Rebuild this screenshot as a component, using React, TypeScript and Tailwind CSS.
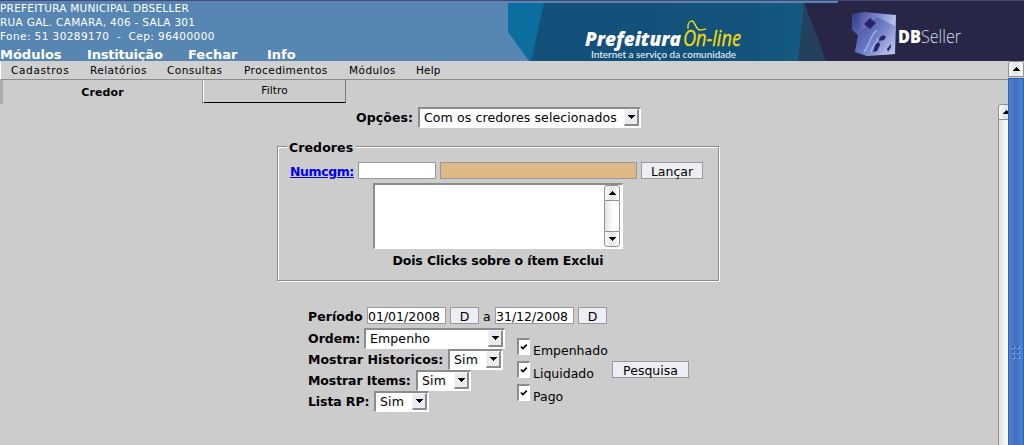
import React from "react";

type BoxProps = { className?: string; children?: React.ReactNode };

function Arrow({ up = false }: { up?: boolean }) {
  return (
    <svg width="7" height="4" viewBox="0 0 7 4" shapeRendering="crispEdges" className="block">
      <path d={up ? "M3 0h1v1h1v1h1v1h1v1H0V3h1V2h1V1h1z" : "M0 0h7v1H6v1H5v1H4v1H3V3H2V2H1V1H0z"} />
    </svg>
  );
}

function Select({ className = "", children }: BoxProps) {
  return (
    <button
      type="button"
      className={`flex h-[21px] shrink-0 items-stretch justify-between border-2 border-r-[1px] border-b-[1px] border-t-[#8c8c8c] border-l-[#8c8c8c] border-r-white border-b-white bg-white pr-px pb-px text-left text-[12.5px] leading-[17px] tracking-[0.11px] ${className}`}
    >
      <span className="pl-1 whitespace-nowrap">{children}</span>
      <span className="flex w-[15px] items-center justify-center border-t border-r-2 border-b-2 border-l border-t-[#f4f5f9] border-l-[#f4f5f9] border-r-[#8c8c8c] border-b-[#8c8c8c] bg-[#e9ebf1]">
        <Arrow />
      </span>
    </button>
  );
}

function Button({ className = "", children }: BoxProps) {
  return (
    <button
      type="button"
      className={`flex h-[17px] shrink-0 items-center justify-center border border-[#999] bg-[#edeef3] pt-px text-[12.5px] leading-[15px] ${className}`}
    >
      {children}
    </button>
  );
}

function Field({ className = "", children }: BoxProps) {
  return (
    <div className={`h-[17px] shrink-0 border border-[#999] pt-px text-[12.5px] leading-[16px] whitespace-nowrap ${className}`}>
      {children}
    </div>
  );
}

function Check({ children }: BoxProps) {
  return (
    <label className="flex h-[23px]">
      <span className="flex h-[17px] w-[13px] items-center justify-center border-t-2 border-r border-b border-l-2 border-t-[#8c8c8c] border-r-white border-b-white border-l-[#8c8c8c] bg-white pb-px">
        <svg width="8" height="8" viewBox="0 0 8 8" fill="none" stroke="#000" strokeWidth="1.6">
          <path d="M.9 3.500 2.900 5.500 6.800 1.600" />
        </svg>
      </span>
      <span className="pt-[5px] pl-[3px] text-[12.5px] leading-[16px]">{children}</span>
    </label>
  );
}

function ScrollButton({ up = false }: { up?: boolean }) {
  return (
    <div
      className={`flex h-4 w-4 shrink-0 items-center justify-center border border-[#929292] bg-linear-to-r from-[#fafafa] via-[#e3e3e5] to-white ${up ? "rounded-t-[3px]" : "rounded-b-[3px]"}`}
    >
      <Arrow up={up} />
    </div>
  );
}

function Banner() {
  return (
    <svg width="516" height="61" viewBox="508 0 516 61" className="block shrink-0">
      <defs>
        <linearGradient id="sea" x1="0" x2="1">
          <stop offset="0" stopColor="#13507a" />
          <stop offset=".75" stopColor="#13527b" />
          <stop offset="1" stopColor="#145b80" />
        </linearGradient>
        <linearGradient id="cube" x1="0" y1="0" x2="1" y2=".4">
          <stop offset="0" stopColor="#3b4185" />
          <stop offset=".5" stopColor="#7581cb" />
          <stop offset="1" stopColor="#c5d0f3" />
        </linearGradient>
        <linearGradient id="front" x1="0" y1="0" x2="1" y2="1">
          <stop offset="0" stopColor="#333b8b" />
          <stop offset=".55" stopColor="#6171bf" />
          <stop offset="1" stopColor="#bdc8ef" />
        </linearGradient>
      </defs>
      <path d="M508 3h36v58h-15l-21-29z" fill="#0b6e9f" />
      <path d="M544 3h262v58H531z" fill="url(#sea)" />
      <path d="M804 3h2l22 58h-30z" fill="#23405f" />
      <path d="M804.500 3H838V1h186v60H826z" fill="#272646" />
      <g fontFamily="'Open Sans', sans-serif">
        <text x="585" y="46" fontSize="20" fontWeight="800" fontStyle="italic" fill="#fff" textLength="96" lengthAdjust="spacingAndGlyphs">Prefeitura</text>
        <text x="683" y="46" fontSize="21" fontStyle="italic" fill="#f1dc0b" stroke="#f1dc0b" strokeWidth=".3" textLength="58" lengthAdjust="spacingAndGlyphs">On-line</text>
      </g>
      <path d="M688 29v-3c0-3 2-5 4-5s3 4 5 7 4 2 9 1" fill="none" stroke="#f1dc0b" strokeWidth="1.4" />
      <text x="591" y="57.500" fontFamily="Lato, sans-serif" fontSize="9.500" fontWeight="500" fill="#e8f2f6" textLength="145" lengthAdjust="spacingAndGlyphs">Internet a serviço da comunidade</text>
      <path d="m852 14 12-2 32 3-1 39-28 2-12-4 3-17-6-5z" fill="url(#cube)" />
      <path d="m852 14 7-1 1 14-1 4-7-2zM855 52l4-19 18-16 18 9v28l-28 1z" fill="url(#front)" opacity=".7" />
      <path d="m864 24 6-6 6 5-6 6zM879 41c0-5 5-7 7-4l-2 3zM873 52c2-5 1-8 6-10l1 3-3 6zM887 49l4-5v3l-3 5z" fill="#2c236e" />
      <path d="M864 52c6-7 5-15 13-22M871 52c1-7 6-8 7-14" fill="none" stroke="#a9b9ec" strokeWidth="1.200" />
      <text x="898" y="43" fontFamily="'Open Sans', sans-serif" fontSize="18" fontWeight="800" fill="#fff" textLength="23" lengthAdjust="spacingAndGlyphs">DB</text>
      <text x="921" y="43" fontFamily="'Open Sans', sans-serif" fontSize="19" fontWeight="300" fill="#dadbe7" textLength="40" lengthAdjust="spacingAndGlyphs">Seller</text>
      <path d="M508 .5h516" stroke="#484778" />
    </svg>
  );
}

export default function App() {
  return (
    <div className="flex h-[445px] w-[1024px] flex-col overflow-hidden bg-[#ccc] font-['DejaVu_Sans',sans-serif] text-black">
      <header className="flex h-[61px] shrink-0 bg-[#5886b2] text-white">
        <div className="w-[508px] border-t border-[#484778]">
          <div className="text-[10.5px] leading-[14px] whitespace-pre">
            <p className="tracking-[0.25px]">PREFEITURA MUNICIPAL DBSELLER</p>
            <p className="tracking-[0.3px]">RUA GAL. CAMARA, 406 - SALA 301</p>
            <p className="tracking-[0.42px]">{"Fone: 51 30289170  -  Cep: 96400000"}</p>
          </div>
          <nav className="mt-1 flex text-[13px] leading-4 font-bold">
            <a className="w-[87px]">Módulos</a>
            <a className="w-[101px] tracking-[-0.2px]">Instituição</a>
            <a className="w-[79px]">Fechar</a>
            <a>Info</a>
          </nav>
        </div>
        <Banner />
      </header>

      <div className="flex min-h-0 flex-1">
        <div className="flex w-[1008px] flex-col">
          <nav className="flex h-[19px] shrink-0 border-b border-l border-b-[#8c8c8c] border-l-white bg-[#d0d0d0] pl-[10px] text-[10.5px] leading-[19px] tracking-[0.45px]">
            <a className="w-[79px] tracking-[0.65px]">Cadastros</a>
            <a className="w-[77px]">Relatórios</a>
            <a className="w-[77px]">Consultas</a>
            <a className="w-[105px]">Procedimentos</a>
            <a className="w-[67px]">Módulos</a>
            <a className="tracking-[0.2px]">Help</a>
          </nav>

          <div className="flex h-6 shrink-0 text-center text-[11px]">
            <div className="w-[203px] border-r border-l-[3px] border-r-[#999] border-l-[#aaa] pt-px leading-6 font-bold tracking-[0.1px]">Credor</div>
            <div className="h-[23px] w-[143px] border-r border-b border-l border-r-[#777] border-b-black border-l-white text-[10.5px] leading-5 tracking-[0.1px]">Filtro</div>
          </div>

          <div className="flex min-h-0 flex-1">
            <main className="w-[998px]">
              <div className="flex pt-[3px] pl-[356px] text-[12.5px]">
                <span className="w-[62px] leading-[21px] font-bold tracking-[0.1px]">Opções:</span>
                <Select className="w-[223px]">Com os credores selecionados</Select>
              </div>

              <section className="mt-[18px] ml-[277px] h-[135px] w-[442px] border border-[#8c8c8c] shadow-[1px_1px_0_#fff,inset_1px_1px_0_#fff]">
                <h2 className="-mt-2 ml-[9px] h-4 w-[69px] bg-[#ccc] pl-[2px] text-[12.5px] leading-[18px] font-bold tracking-[0.1px]">Credores</h2>
                <div className="mt-[7px] flex h-[17px] gap-1 pl-3">
                  <a className="w-[64px] text-[12.5px] leading-[20px] font-bold tracking-[-0.4px] text-[#0000ee] underline">Numcgm:</a>
                  <Field className="w-[78px] bg-white" />
                  <Field className="w-[197px] bg-[#deb887]" />
                  <Button className="w-[62px]">Lançar</Button>
                </div>
                <div className="mt-1 ml-[95px] flex h-[66px] w-[250px] justify-end border-2 border-r-[1px] border-b-[1px] border-t-[#8c8c8c] border-l-[#8c8c8c] border-r-white border-b-white bg-white pr-[2px] pb-px">
                  <div className="flex w-4 flex-col">
                    <ScrollButton up />
                    <div className="flex-1 border-x border-[#929292] bg-linear-to-r from-[#e2e2e4] to-white to-60%" />
                    <ScrollButton />
                  </div>
                </div>
                <p className="mt-1 text-center text-[12.5px] leading-4 font-bold tracking-[-0.12px]">Dois Clicks sobre o ítem Exclui</p>
              </section>

              <div className="mt-[26px] flex h-[17px] pl-[308px] text-[12.5px] leading-[19px]">
                <b className="w-[59px] tracking-[0.05px]">Período</b>
                <Field className="w-[79px] bg-white">01/01/2008</Field>
                <Button className="ml-1 w-[29px]">D</Button>
                <span className="w-4 pl-1">a</span>
                <Field className="w-[79px] bg-white">31/12/2008</Field>
                <Button className="ml-1 w-[29px]">D</Button>
              </div>

              <div className="mt-1 flex pl-[308px] text-[12.5px] leading-[21px] font-bold">
                <div className="flex w-[209px] flex-col">
                  <div className="flex">
                    <span className="w-[56px]">Ordem:</span>
                    <Select className="w-[141px] font-normal">Empenho</Select>
                  </div>
                  <div className="flex">
                    <span className="w-[140px]">Mostrar Historicos:</span>
                    <Select className="w-[55px] font-normal">Sim</Select>
                  </div>
                  <div className="flex">
                    <span className="w-[108px] tracking-[-0.1px]">Mostrar Items:</span>
                    <Select className="w-[55px] font-normal">Sim</Select>
                  </div>
                  <div className="flex">
                    <span className="w-[66px] tracking-[-0.1px]">Lista RP:</span>
                    <Select className="w-[55px] font-normal">Sim</Select>
                  </div>
                </div>
                <div className="w-[95px] pt-[10px] font-normal">
                  <Check>Empenhado</Check>
                  <Check>Liquidado</Check>
                  <Check>Pago</Check>
                </div>
                <div className="pt-[33px] font-normal">
                  <Button className="w-[77px]">Pesquisa</Button>
                </div>
              </div>
            </main>
            <div className="flex w-[10px] flex-col overflow-hidden">
              <ScrollButton up />
              <div className="w-4 flex-1 border-l border-[#929292] bg-linear-to-r from-[#e2e2e4] to-white to-60%" />
            </div>
          </div>
        </div>

        <div className="flex w-4 flex-col">
          <ScrollButton up />
          <div className="mt-px flex flex-1 justify-center border-x border-t border-[#315fac] bg-linear-to-r from-[#4d81d5] via-[#416fbd] to-[#4e82d6] pt-[267px]">
            <svg width="9" height="13" viewBox="0 0 9 13" shapeRendering="crispEdges">
              {[0, 5, 10].map((y) =>
                [0, 5].map((x) => (
                  <g key={`${x}-${y}`}>
                    <path d={`M${x} ${y}h3v3h-3z`} fill="#77a5ed" />
                    <path d={`M${x} ${y}h2v2h-2z`} fill="#2d599e" />
                  </g>
                )),
              )}
            </svg>
          </div>
        </div>
      </div>
    </div>
  );
}
